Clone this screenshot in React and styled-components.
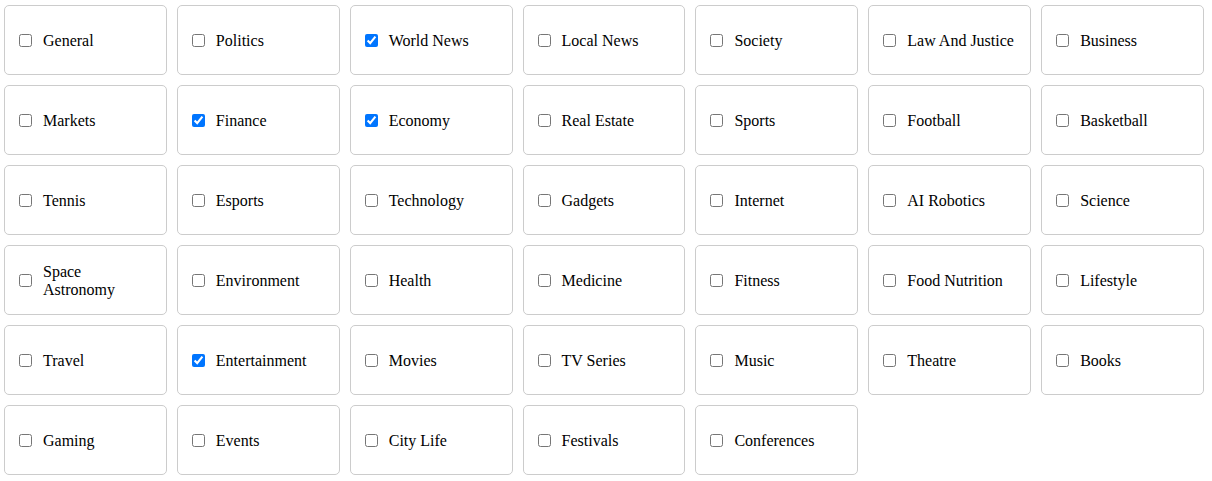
import React, { useState } from "react";
import styled, { createGlobalStyle } from "styled-components";

const GlobalStyle = createGlobalStyle`
  body {
    margin: 0;
    background: #ffffff;
    font-family: "Liberation Serif", "Times New Roman", serif;
  }
`;

const Grid = styled.div`
  display: grid;
  grid-template-columns: repeat(7, 1fr);
  gap: 10px;
  padding: 5px 8px 5px 4px;
`;

const Card = styled.label`
  box-sizing: border-box;
  height: 70px;
  padding: 10px;
  border: 1px solid #cccccc;
  border-radius: 5px;
  display: flex;
  align-items: center;
  gap: 8px;
  font-size: 16px;
  line-height: normal;
  color: #000;
  cursor: pointer;
`;

const Box = styled.input`
  flex: none;
  margin: 3px 3px 3px 4px;
`;

const Name = styled.span`
  padding-top: 1px;
`;

const topics = [
  "General", "Politics", "World News", "Local News", "Society", "Law And Justice", "Business",
  "Markets", "Finance", "Economy", "Real Estate", "Sports", "Football", "Basketball",
  "Tennis", "Esports", "Technology", "Gadgets", "Internet", "AI Robotics", "Science",
  "Space Astronomy", "Environment", "Health", "Medicine", "Fitness", "Food Nutrition", "Lifestyle",
  "Travel", "Entertainment", "Movies", "TV Series", "Music", "Theatre", "Books",
  "Gaming", "Events", "City Life", "Festivals", "Conferences",
];

export default function App() {
  const [picked, setPicked] = useState(["World News", "Finance", "Economy", "Entertainment"]);

  const toggle = (t) => {
    setPicked((p) => (p.includes(t) ? p.filter((x) => x !== t) : [...p, t]));
  };

  return (
    <>
      <GlobalStyle />
      <Grid>
        {topics.map((t) => (
          <Card key={t}>
            <Box type="checkbox" checked={picked.includes(t)} onChange={() => toggle(t)} />
            <Name>{t}</Name>
          </Card>
        ))}
      </Grid>
    </>
  );
}
